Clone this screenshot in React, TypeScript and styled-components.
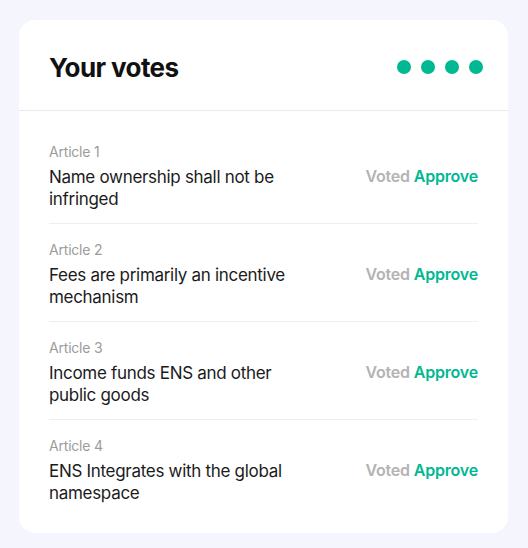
import React from "react";
import styled, { createGlobalStyle } from "styled-components";

const Global = createGlobalStyle`
  html, body { margin: 0; padding: 0; background: #f5f5fd; }
  body { font-family: Inter, "Noto Sans", sans-serif; }
`;

const Page = styled.div`
  padding: 20px 20px 16px 19px;
`;

const Card = styled.div`
  background: #ffffff;
  border-radius: 16px;
  width: 489px;
  overflow: hidden;
`;

const Header = styled.div`
  box-sizing: border-box;
  display: flex;
  align-items: center;
  justify-content: space-between;
  height: 91px;
  padding: 4px 25px 0 30px;
  border-bottom: 1px solid #e9e9f3;
`;

const Title = styled.h1`
  margin: 0;
  font-size: 26px;
  font-weight: 700;
  letter-spacing: -0.6px;
  color: #111111;
`;

const Dots = styled.div`
  display: flex;
  gap: 10px;
`;

const Dot = styled.span`
  width: 14px;
  height: 14px;
  border-radius: 50%;
  background: #00b891;
`;

const List = styled.div`
  padding: 15px 30px 16px 30px;
`;

const Row = styled.div<{ $last?: boolean }>`
  display: flex;
  justify-content: space-between;
  align-items: flex-start;
  padding: 16px 0 13px;
  border-bottom: ${(p) => (p.$last ? "none" : "1px solid #efeff3")};
`;

const Info = styled.div`
  display: flex;
  flex-direction: column;
  gap: 4px;
  width: 250px;
`;

const Label = styled.div`
  font-size: 14px;
  line-height: 20px;
  color: #9c9c9c;
  letter-spacing: -0.2px;
`;

const Name = styled.div`
  font-size: 17px;
  line-height: 22px;
  color: #1b1b1b;
  letter-spacing: -0.3px;
`;

const Vote = styled.div`
  margin-top: 23px;
  font-size: 16px;
  line-height: 22px;
  font-weight: 600;
  letter-spacing: -0.2px;
  display: flex;
  gap: 4px;
`;

const Voted = styled.span`
  color: #b3b3b3;
`;

const Choice = styled.span`
  color: #00b891;
`;

const articles = [
  { label: "Article 1", name: "Name ownership shall not be infringed" },
  { label: "Article 2", name: "Fees are primarily an incentive mechanism" },
  { label: "Article 3", name: "Income funds ENS and other public goods" },
  { label: "Article 4", name: "ENS Integrates with the global namespace" },
];

export default function App() {
  return (
    <Page>
      <Global />
      <Card>
        <Header>
          <Title>Your votes</Title>
          <Dots>
            <Dot />
            <Dot />
            <Dot />
            <Dot />
          </Dots>
        </Header>
        <List>
          {articles.map((a, i) => (
            <Row key={a.label} $last={i === articles.length - 1}>
              <Info>
                <Label>{a.label}</Label>
                <Name>{a.name}</Name>
              </Info>
              <Vote>
                <Voted>Voted</Voted>
                <Choice>Approve</Choice>
              </Vote>
            </Row>
          ))}
        </List>
      </Card>
    </Page>
  );
}
